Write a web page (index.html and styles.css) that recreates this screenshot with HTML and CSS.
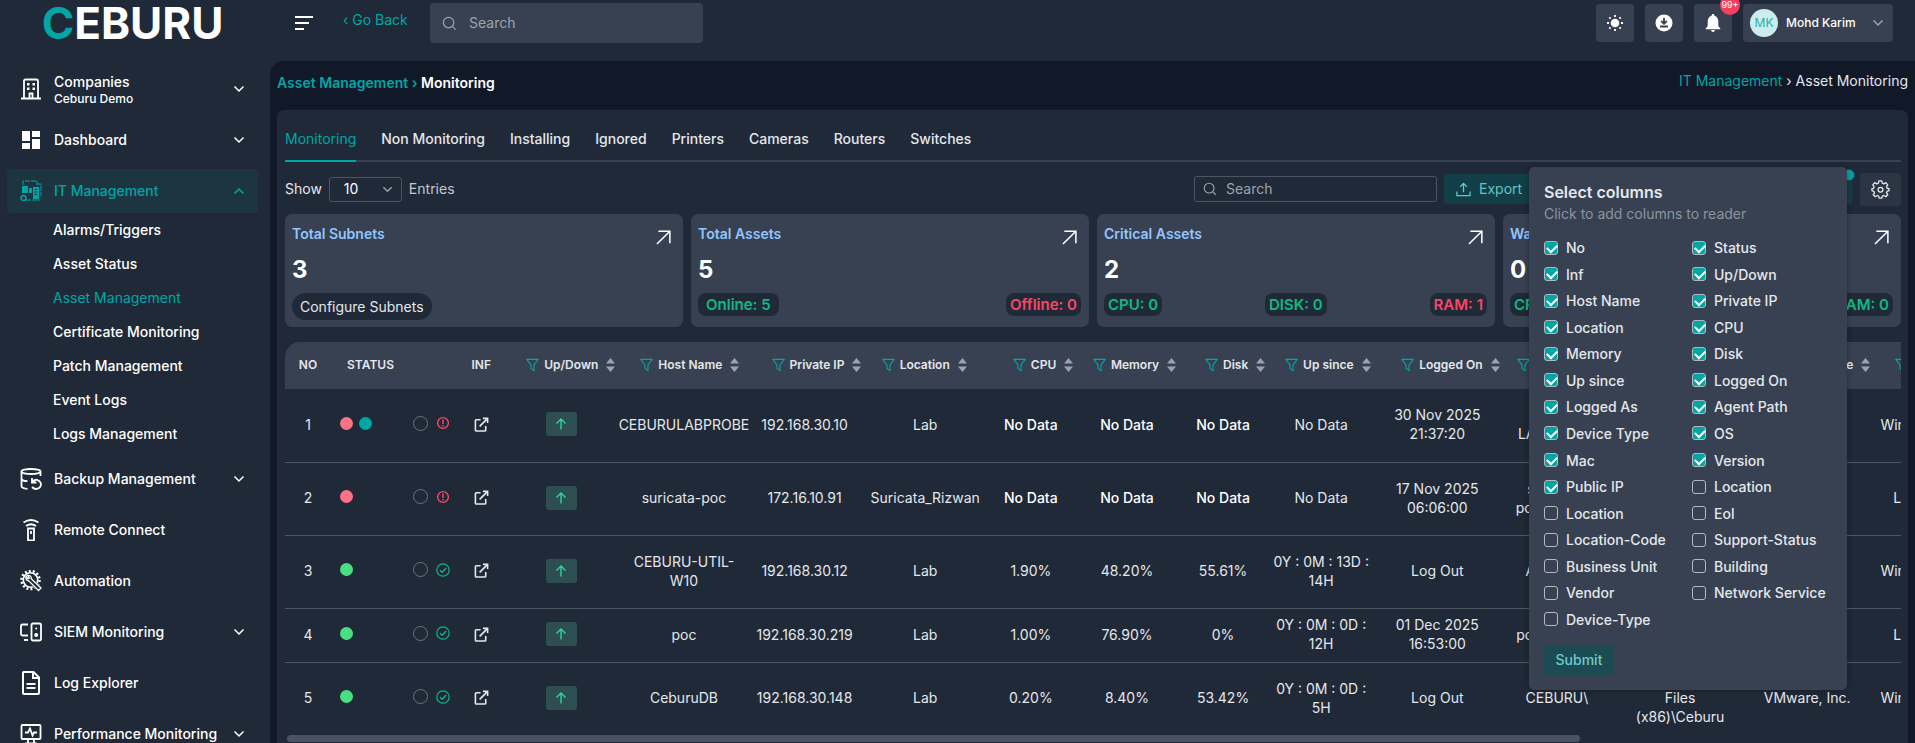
FILE: index.html
```html
<!DOCTYPE html>
<html lang="en">
<head>
    <meta charset="UTF-8">
    <meta name="viewport" content="width=device-width, initial-scale=1.0">
    <title>Asset Monitoring</title>
    <link rel="stylesheet" href="styles.css">
</head>
<body>

<!-- shared icons -->
<svg class="sprite" aria-hidden="true">
    <symbol id="chevron" viewBox="0 0 12 12"><path d="M1.5 3.5 6 8l4.5-4.5" fill="none" stroke="currentColor" stroke-width="1.5"/></symbol>
    <symbol id="search" viewBox="0 0 16 16"><circle cx="7" cy="7" r="5.6" fill="none" stroke="currentColor" stroke-width="1.3"/><path d="m11 11 3.6 3.6" stroke="currentColor" stroke-width="1.3"/></symbol>
    <symbol id="filter" viewBox="0 0 14 14"><path d="M.8 1h12.4L8.6 7v6L5.4 10.6V7z" fill="none" stroke="currentColor" stroke-width="1.2" stroke-linejoin="round"/></symbol>
    <symbol id="sort" viewBox="0 0 9 14"><path d="M4.5 0 9 5.5H0zM4.5 14 9 8.5H0z" fill="currentColor"/></symbol>
    <symbol id="corner" viewBox="0 0 16 16"><path d="M1 15 14.5 1.5M2.5 1.2h12.3V14" fill="none" stroke="currentColor" stroke-width="1.6"/></symbol>
    <symbol id="open" viewBox="0 0 16 16"><path d="M7 3H2.5Q1.5 3 1.5 4v10q0 1 1 1h9q1 0 1-1V9.5M6 10l8-8M9.5 1.500h5v5" fill="none" stroke="currentColor" stroke-width="1.7"/></symbol>
    <symbol id="up" viewBox="0 0 12 12"><path d="M6 11.5V1.2M1.5 5.5 6 1l4.5 4.5" fill="none" stroke="currentColor" stroke-width="1.4"/></symbol>
    <symbol id="alert" viewBox="0 0 14 14"><circle cx="7" cy="7" r="5.4" fill="none" stroke="currentColor" stroke-width="1.4"/><path d="M7 3.5V8M7 9v1.5" stroke="currentColor" stroke-width="1.5"/></symbol>
    <symbol id="ok" viewBox="0 0 14 14"><circle cx="7" cy="7" r="6.2" fill="none" stroke="currentColor" stroke-width="1.2"/><path d="m4 7.2 2.2 2.1L10.2 5" fill="none" stroke="currentColor" stroke-width="1.3"/></symbol>
</svg>

<div class="layout">
    <aside class="sidebar">
        <a href="#" class="logo"><span>C</span>EBURU</a>
        <nav class="menu">
            <button class="menu-item">
                <svg class="menu-icon" viewBox="0 0 22 22"><path d="M4 20.500V3q0-1.500 1.500-1.500h11Q18 1.500 18 3v17.500M1 20.500h20M9.500 20v-4.500h3V20" fill="none" stroke="currentColor" stroke-width="1.800"/><path d="M7 5h2.500v2.500H7zM12.500 5H15v2.500h-2.500zM7 9.500h2.500V12H7zM12.500 9.500H15V12h-2.500z" fill="currentColor"/></svg>
                <span class="menu-text">Companies<small>Ceburu Demo</small></span>
                <svg class="chev"><use href="#chevron"/></svg>
            </button>
            <button class="menu-item">
                <svg class="menu-icon" viewBox="0 0 22 22"><path d="M2 2h8v10H2zM12 2h8v6h-8zM2 14h8v6H2zM12 10h8v10h-8z" fill="currentColor"/></svg>
                <span class="menu-text">Dashboard</span>
                <svg class="chev"><use href="#chevron"/></svg>
            </button>
            <button class="menu-item active">
                <svg class="menu-icon" viewBox="0 0 22 22"><path d="M3 5V1h14v4M17 4h4v12M6 20h14" fill="none" stroke="currentColor" stroke-width="1" stroke-dasharray="5 1"/><path d="M2 6h6v7H2zM9 8h3v5H9zM13 7h6v12h-6z" fill="currentColor"/><path d="M14.500 9.500h3M14.500 12h3M14.500 14.500h3" stroke="#1d3540"/><circle cx="3.500" cy="18" r="2.500" fill="none" stroke="currentColor" stroke-width="1.400"/></svg>
                <span class="menu-text">IT Management</span>
                <svg class="chev open"><use href="#chevron"/></svg>
            </button>
            <div class="submenu">
                <a href="#">Alarms/Triggers</a>
                <a href="#">Asset Status</a>
                <a href="#" class="current">Asset Management</a>
                <a href="#">Certificate Monitoring</a>
                <a href="#">Patch Management</a>
                <a href="#">Event Logs</a>
                <a href="#">Logs Management</a>
            </div>
            <button class="menu-item">
                <svg class="menu-icon" viewBox="0 0 22 22"><g fill="none" stroke="currentColor" stroke-width="1.800"><ellipse cx="11" cy="3.500" rx="9.500" ry="2.500"/><path d="M1.500 3.500V18q0 2.500 6 2.800M20.500 3.500V8M1.500 11q1 2 6 2.200M12 10v4.500h4.500M12.500 14q2-3 5-2 3.500 1.500 3.500 4.500-.5 4-5 4.500-2 0-4-2"/></g></svg>
                <span class="menu-text">Backup Management</span>
                <svg class="chev"><use href="#chevron"/></svg>
            </button>
            <a href="#" class="menu-item">
                <svg class="menu-icon" viewBox="0 0 22 22"><path d="M3.500 3.500q7.500-5 15 0M6 7q5-3.500 10 0M8 9.500h6v12H8zM11 12v3" fill="none" stroke="currentColor" stroke-width="1.800"/></svg>
                <span class="menu-text">Remote Connect</span>
            </a>
            <a href="#" class="menu-item">
                <svg class="menu-icon" viewBox="0 0 22 22"><circle cx="10.500" cy="10" r="9" fill="none" stroke="currentColor" stroke-width="2.500" stroke-dasharray="2 2.040"/><circle cx="10.500" cy="10" r="7.200" fill="none" stroke="currentColor" stroke-width="1.600"/><path d="m9 9 11.500 11" stroke="#1f2937" stroke-width="5.500"/><path d="M6 6.500q-1 4 3 4.500l9.500 9.500 2.500-2.500-9.500-9q0-4-4-3.500l2 2.500-1.500 1z" fill="none" stroke="currentColor" stroke-width="1.300"/></svg>
                <span class="menu-text">Automation</span>
            </a>
            <button class="menu-item">
                <svg class="menu-icon" viewBox="0 0 22 22"><path d="M8 3.500H2.500Q1 3.500 1 5v8q0 1.500 1.500 1.500H8M4 19h4M13 2.500h6.500Q21 2.500 21 4v14q0 1.500-1.500 1.500H13q-1.500 0-1.500-1.500V4q0-1.500 1.500-1.500z" fill="none" stroke="currentColor" stroke-width="1.800"/><circle cx="16.200" cy="14" r="2" fill="currentColor"/><circle cx="16.200" cy="7.500" r="1" fill="currentColor"/></svg>
                <span class="menu-text">SIEM Monitoring</span>
                <svg class="chev"><use href="#chevron"/></svg>
            </button>
            <a href="#" class="menu-item">
                <svg class="menu-icon tall" viewBox="0 0 22 24"><path d="M3.500 1h10L19 6.500V22q0 1-1 1H4q-1 0-1-1V2q0-1 .5-1zM13 1v6h6M6.500 13h9M6.500 17h9" fill="none" stroke="currentColor" stroke-width="2"/></svg>
                <span class="menu-text">Log Explorer</span>
            </a>
            <button class="menu-item">
                <svg class="menu-icon" viewBox="0 0 22 22"><path d="M2.500 2h17q1 0 1 1v12q0 1-1 1h-17q-1 0-1-1V3q0-1 1-1zM8 16v4M14 16v4M5 20.500h12M5 9.500h3l2-4 2.500 7 1.500-3h3" fill="none" stroke="currentColor" stroke-width="1.800"/></svg>
                <span class="menu-text">Performance Monitoring</span>
                <svg class="chev"><use href="#chevron"/></svg>
            </button>
        </nav>
    </aside>

    <div class="page">
        <header class="topbar">
            <button class="burger" aria-label="Toggle menu"><span></span><span></span><span></span></button>
            <a href="#" class="go-back">&lsaquo; Go Back</a>
            <label class="top-search">
                <svg><use href="#search"/></svg>
                <input type="text" placeholder="Search" aria-label="Search">
            </label>
            <div class="top-actions">
                <button class="icon-button" aria-label="Theme">
                    <svg viewBox="0 0 18 18"><circle cx="9" cy="9" r="4.300" fill="currentColor"/><path d="M9 1v2M9 15v2M1 9h2M15 9h2M3.300 3.300l1.300 1.300M13.400 13.400l1.300 1.300M3.300 14.700l1.300-1.300M13.400 4.600l1.300-1.300" stroke="currentColor" stroke-width="1.800"/></svg>
                </button>
                <button class="icon-button" aria-label="Downloads">
                    <svg viewBox="0 0 18 18"><circle cx="9" cy="9" r="8.500" fill="currentColor"/><path d="M9 4v5.500M6.200 7 9 9.800 11.800 7M5 12.500h8" fill="none" stroke="#374151" stroke-width="1.800"/></svg>
                </button>
                <button class="icon-button" aria-label="Notifications">
                    <svg viewBox="0 0 18 18"><path d="M9 0q1.300 0 1.300 1.400Q14.300 3 14.300 7.500V12l2 2.500v.8H1.700v-.8l2-2.500V7.500Q3.700 3 7.700 1.400 7.700 0 9 0zM7 16h4q-.5 2-2 2t-2-2z" fill="currentColor"/></svg>
                    <span class="notify">99+</span>
                </button>
                <button class="user">
                    <span class="avatar">MK</span>
                    <span class="user-name">Mohd Karim</span>
                    <svg class="chev"><use href="#chevron"/></svg>
                </button>
            </div>
        </header>

        <main class="content">
            <div class="crumbs">
                <div class="crumbs-main"><a href="#">Asset Management ›</a> <span>Monitoring</span></div>
                <div class="crumbs-path"><a href="#">IT Management</a> <span>›</span> <span>Asset Monitoring</span></div>
            </div>

            <section class="panel">
                <nav class="tabs">
                    <a href="#" class="active">Monitoring</a>
                    <a href="#">Non Monitoring</a>
                    <a href="#">Installing</a>
                    <a href="#">Ignored</a>
                    <a href="#">Printers</a>
                    <a href="#">Cameras</a>
                    <a href="#">Routers</a>
                    <a href="#">Switches</a>
                </nav>

                <div class="toolbar">
                    <label for="entries">Show</label>
                    <span class="select-box">
                        <select id="entries"><option>10</option><option>25</option><option>50</option></select>
                        <svg><use href="#chevron"/></svg>
                    </span>
                    <span class="muted">Entries</span>
                    <label class="table-search">
                        <svg><use href="#search"/></svg>
                        <input type="text" placeholder="Search" aria-label="Search assets">
                    </label>
                    <button class="teal-button export">
                        <svg viewBox="0 0 16 16"><path d="M8 11V1.500M4.500 5 8 1.500 11.500 5M1 10v4.500h14V10" fill="none" stroke="currentColor" stroke-width="1.400"/></svg>
                        Export
                    </button>
                    <button class="teal-button filters" aria-label="Filters"><span class="dot-badge"></span></button>
                    <button class="gear" aria-label="Columns">
                        <svg viewBox="0 0 20 20"><path d="m8.300 1-.5 2.300-1.700.8-2.200-1.300-2 2.400 1.300 2-.5 1.600L1 9.200v2l2 .7.600 1.600-1.300 2.100 2.200 2 2-1.300 1.600.7.500 2h2.800l.5-2 1.700-.7 2 1.300 2-2.100-1.300-2 .7-1.600 2-.7v-2l-2-.5-.7-1.600 1.300-2-2-2.300-2.100 1.300-1.600-.8L11.300 1z" fill="none" stroke="currentColor" stroke-width="1.400" stroke-linejoin="round"/><circle cx="10" cy="10.200" r="2.500" fill="none" stroke="currentColor" stroke-width="1.400"/></svg>
                    </button>

                    <form class="columns-menu">
                        <h3>Select columns</h3>
                        <p>Click to add columns to reader</p>
                        <div class="columns-grid">
                            <label><input type="checkbox" checked>No</label>
                            <label><input type="checkbox" checked>Status</label>
                            <label><input type="checkbox" checked>Inf</label>
                            <label><input type="checkbox" checked>Up/Down</label>
                            <label><input type="checkbox" checked>Host Name</label>
                            <label><input type="checkbox" checked>Private IP</label>
                            <label><input type="checkbox" checked>Location</label>
                            <label><input type="checkbox" checked>CPU</label>
                            <label><input type="checkbox" checked>Memory</label>
                            <label><input type="checkbox" checked>Disk</label>
                            <label><input type="checkbox" checked>Up since</label>
                            <label><input type="checkbox" checked>Logged On</label>
                            <label><input type="checkbox" checked>Logged As</label>
                            <label><input type="checkbox" checked>Agent Path</label>
                            <label><input type="checkbox" checked>Device Type</label>
                            <label><input type="checkbox" checked>OS</label>
                            <label><input type="checkbox" checked>Mac</label>
                            <label><input type="checkbox" checked>Version</label>
                            <label><input type="checkbox" checked>Public IP</label>
                            <label><input type="checkbox">Location</label>
                            <label><input type="checkbox">Location</label>
                            <label><input type="checkbox">Eol</label>
                            <label><input type="checkbox">Location-Code</label>
                            <label><input type="checkbox">Support-Status</label>
                            <label><input type="checkbox">Business Unit</label>
                            <label><input type="checkbox">Building</label>
                            <label><input type="checkbox">Vendor</label>
                            <label><input type="checkbox">Network Service</label>
                            <label><input type="checkbox">Device-Type</label>
                        </div>
                        <button type="button" class="submit">Submit</button>
                    </form>
                </div>

                <div class="stats">
                    <div class="stat">
                        <div class="stat-head"><h4>Total Subnets</h4><svg><use href="#corner"/></svg></div>
                        <strong>3</strong>
                        <div class="stat-foot"><button class="configure">Configure Subnets</button></div>
                    </div>
                    <div class="stat">
                        <div class="stat-head"><h4>Total Assets</h4><svg><use href="#corner"/></svg></div>
                        <strong>5</strong>
                        <div class="stat-foot"><span class="badge wide good">Online: 5</span><span class="badge bad">Offline: 0</span></div>
                    </div>
                    <div class="stat">
                        <div class="stat-head"><h4>Critical Assets</h4><svg><use href="#corner"/></svg></div>
                        <strong>2</strong>
                        <div class="stat-foot"><span class="badge good">CPU: 0</span><span class="badge good">DISK: 0</span><span class="badge bad">RAM: 1</span></div>
                    </div>
                    <div class="stat">
                        <div class="stat-head"><h4>Warning Assets</h4><svg><use href="#corner"/></svg></div>
                        <strong>0</strong>
                        <div class="stat-foot"><span class="badge good">CPU: 0</span><span class="badge good">DISK: 0</span><span class="badge good">RAM: 0</span></div>
                    </div>
                </div>

                <div class="table-wrap">
                    <table>
                        <colgroup>
                            <col class="w-no"><col class="w-status"><col class="w-no"><col class="w-updown"><col class="w-host"><col class="w-ip"><col class="w-host"><col class="w-cpu"><col class="w-mem"><col class="w-cpu"><col class="w-since"><col class="w-since"><col class="w-path"><col class="w-path"><col class="w-host"><col class="w-os">
                        </colgroup>
                        <thead>
                            <tr>
                                <th class="plain">NO</th>
                                <th class="plain left">STATUS</th>
                                <th class="plain">INF</th>
                                <th><svg class="filter"><use href="#filter"/></svg>Up/Down<svg class="sort"><use href="#sort"/></svg></th>
                                <th><svg class="filter"><use href="#filter"/></svg>Host Name<svg class="sort"><use href="#sort"/></svg></th>
                                <th><svg class="filter"><use href="#filter"/></svg>Private IP<svg class="sort"><use href="#sort"/></svg></th>
                                <th><svg class="filter"><use href="#filter"/></svg>Location<svg class="sort"><use href="#sort"/></svg></th>
                                <th><svg class="filter"><use href="#filter"/></svg>CPU<svg class="sort"><use href="#sort"/></svg></th>
                                <th><svg class="filter"><use href="#filter"/></svg>Memory<svg class="sort"><use href="#sort"/></svg></th>
                                <th><svg class="filter"><use href="#filter"/></svg>Disk<svg class="sort"><use href="#sort"/></svg></th>
                                <th><svg class="filter"><use href="#filter"/></svg>Up since<svg class="sort"><use href="#sort"/></svg></th>
                                <th><svg class="filter"><use href="#filter"/></svg>Logged On<svg class="sort"><use href="#sort"/></svg></th>
                                <th><svg class="filter"><use href="#filter"/></svg>Logged As<svg class="sort"><use href="#sort"/></svg></th>
                                <th><svg class="filter"><use href="#filter"/></svg>Agent Path<svg class="sort"><use href="#sort"/></svg></th>
                                <th><svg class="filter"><use href="#filter"/></svg>Device Type<svg class="sort"><use href="#sort"/></svg></th>
                                <th><svg class="filter"><use href="#filter"/></svg>OS<svg class="sort"><use href="#sort"/></svg></th>
                            </tr>
                        </thead>
                        <tbody>
                            <tr>
                                <td>1</td>
                                <td><div class="status"><span class="dots"><i class="red"></i><i class="teal"></i></span><i class="ring"></i><svg class="bad"><use href="#alert"/></svg></div></td>
                                <td><svg class="inf"><use href="#open"/></svg></td>
                                <td><button class="updown" aria-label="Up"><svg><use href="#up"/></svg></button></td>
                                <td>CEBURULABPROBE</td>
                                <td>192.168.30.10</td>
                                <td>Lab</td>
                                <td class="bright">No Data</td>
                                <td class="bright">No Data</td>
                                <td class="bright">No Data</td>
                                <td>No Data</td>
                                <td>30 Nov 2025<br>21:37:20</td>
                                <td>CEBU<br>LABPROBE\</td>
                                <td>Program<br>Files<br>(x86)\Ceburu</td>
                                <td>VMware</td>
                                <td>Windows</td>
                            </tr>
                            <tr>
                                <td>2</td>
                                <td><div class="status"><span class="dots"><i class="red"></i></span><i class="ring"></i><svg class="bad"><use href="#alert"/></svg></div></td>
                                <td><svg class="inf"><use href="#open"/></svg></td>
                                <td><button class="updown" aria-label="Up"><svg><use href="#up"/></svg></button></td>
                                <td>suricata-poc</td>
                                <td>172.16.10.91</td>
                                <td>Suricata_Rizwan</td>
                                <td class="bright">No Data</td>
                                <td class="bright">No Data</td>
                                <td class="bright">No Data</td>
                                <td>No Data</td>
                                <td>17 Nov 2025<br>06:06:00</td>
                                <td>suricata-<br>poc\suricata</td>
                                <td>/opt/ceburu</td>
                                <td>VMware</td>
                                <td>Linux</td>
                            </tr>
                            <tr>
                                <td>3</td>
                                <td><div class="status"><span class="dots"><i class="green"></i></span><i class="ring"></i><svg class="good"><use href="#ok"/></svg></div></td>
                                <td><svg class="inf"><use href="#open"/></svg></td>
                                <td><button class="updown" aria-label="Up"><svg><use href="#up"/></svg></button></td>
                                <td>CEBURU-UTIL-<br>W10</td>
                                <td>192.168.30.12</td>
                                <td>Lab</td>
                                <td>1.90%</td>
                                <td>48.20%</td>
                                <td>55.61%</td>
                                <td>0Y : 0M : 13D :<br>14H</td>
                                <td>Log Out</td>
                                <td>AzureAD\</td>
                                <td>Program<br>Files<br>(x86)\Ceburu</td>
                                <td>VMware</td>
                                <td>Windows</td>
                            </tr>
                            <tr class="short">
                                <td>4</td>
                                <td><div class="status"><span class="dots"><i class="green"></i></span><i class="ring"></i><svg class="good"><use href="#ok"/></svg></div></td>
                                <td><svg class="inf"><use href="#open"/></svg></td>
                                <td><button class="updown" aria-label="Up"><svg><use href="#up"/></svg></button></td>
                                <td>poc</td>
                                <td>192.168.30.219</td>
                                <td>Lab</td>
                                <td>1.00%</td>
                                <td>76.90%</td>
                                <td>0%</td>
                                <td>0Y : 0M : 0D :<br>12H</td>
                                <td>01 Dec 2025<br>16:53:00</td>
                                <td>poc\ubuntu1</td>
                                <td>/opt/ceburu</td>
                                <td>VMware</td>
                                <td>Linux</td>
                            </tr>
                            <tr>
                                <td>5</td>
                                <td><div class="status"><span class="dots"><i class="green"></i></span><i class="ring"></i><svg class="good"><use href="#ok"/></svg></div></td>
                                <td><svg class="inf"><use href="#open"/></svg></td>
                                <td><button class="updown" aria-label="Up"><svg><use href="#up"/></svg></button></td>
                                <td>CeburuDB</td>
                                <td>192.168.30.148</td>
                                <td>Lab</td>
                                <td>0.20%</td>
                                <td>8.40%</td>
                                <td>53.42%</td>
                                <td>0Y : 0M : 0D :<br>5H</td>
                                <td>Log Out</td>
                                <td>CEBURU\</td>
                                <td>Program<br>Files<br>(x86)\Ceburu</td>
                                <td>VMware, Inc.</td>
                                <td>Windows</td>
                            </tr>
                        </tbody>
                    </table>
                    <div class="scrollbar"></div>
                </div>
            </section>
        </main>
    </div>
</div>

</body>
</html>
```
FILE: styles.css
```css
* {
    box-sizing: border-box;
}
body {
    margin: 0;
    background-color: #1f2937;
    color: #e5e7eb;
    font-family: Inter, "Liberation Sans", sans-serif;
    font-size: 14px;
    line-height: 20px;
}
button, input, select {
    font: inherit;
    color: inherit;
}
button {
    border: none;
    background: none;
    padding: 0;
    cursor: pointer;
}
a {
    color: inherit;
    text-decoration: none;
}
h3, h4, p {
    margin: 0;
}
.sprite {
    display: none;
}
.layout {
    display: flex;
    height: 100vh;
    overflow: hidden;
}

/* sidebar */
.sidebar {
    flex: 0 0 270px;
    padding: 0 12px 0 7px;
    color: #fff;
}
.logo {
    display: flex;
    justify-content: center;
    align-items: center;
    height: 46px;
    margin-bottom: 21px;
    font-size: 44px;
    line-height: 46px;
    font-weight: 700;
}
.logo span {
    color: #00a6a6;
}
.menu {
    display: flex;
    flex-direction: column;
    gap: 7px;
}
.menu-item {
    display: flex;
    align-items: center;
    gap: 12px;
    flex: none;
    height: 44px;
    padding: 0 13px;
    border-radius: 4px;
    text-align: left;
    font-weight: 500;
}
.menu-item.active {
    background-color: #1d3540;
    color: #00a6a6;
}
.menu-icon {
    width: 22px;
    height: 22px;
}
.menu-icon.tall {
    height: 24px;
}
.menu-text {
    flex: 1;
    white-space: nowrap;
}
.menu-text small {
    display: block;
    font-size: 12px;
    line-height: 14px;
}
.chev {
    width: 12px;
    height: 12px;
}
.chev.open {
    transform: rotate(180deg);
}
.submenu {
    display: flex;
    flex-direction: column;
    margin: -7px 0 -1px;
    padding-left: 46px;
    font-weight: 500;
}
.submenu a {
    line-height: 34px;
}
.submenu .current {
    color: #00a6a6;
    font-weight: 400;
}

/* top bar */
.page {
    flex: 1;
    min-width: 0;
    display: flex;
    flex-direction: column;
}
.topbar {
    display: flex;
    align-items: flex-start;
    flex: none;
    height: 61px;
    padding: 3px 22px 0 25px;
}
.burger {
    display: flex;
    flex-direction: column;
    gap: 4px;
    margin: 13px 30px 0 0;
}
.burger span {
    width: 18px;
    height: 2px;
    background-color: #fff;
}
.burger span:nth-child(2) {
    width: 14px;
}
.burger span:last-child {
    width: 9px;
}
.go-back {
    width: 87px;
    line-height: 34px;
    color: #00a6a6;
    white-space: nowrap;
}
.top-search {
    display: flex;
    align-items: center;
    gap: 12px;
    width: 273px;
    height: 40px;
    padding: 0 12px;
    border-radius: 4px;
    background-color: #374151;
    color: #9ca3af;
}
.top-search svg {
    width: 15px;
    height: 15px;
}
.top-search input, .table-search input {
    flex: 1;
    min-width: 0;
    padding: 0;
    border: none;
    outline: none;
    background: none;
}
input::placeholder {
    color: #9ca3af;
}
.top-actions {
    display: flex;
    gap: 11px;
    margin: 1px 0 0 auto;
}
.icon-button {
    position: relative;
    display: flex;
    align-items: center;
    justify-content: center;
    width: 38px;
    height: 38px;
    border-radius: 4px;
    background-color: #374151;
    color: #fff;
}
.icon-button svg {
    width: 18px;
    height: 18px;
}
.notify {
    position: absolute;
    top: -9px;
    right: -8px;
    width: 20px;
    height: 20px;
    border-radius: 10px;
    background-color: #f43f5e;
    font-size: 9px;
    line-height: 20px;
    text-align: center;
}
.user {
    display: flex;
    align-items: center;
    width: 150px;
    height: 38px;
    padding: 0 9px 0 7px;
    border-radius: 4px;
    background-color: #374151;
    color: #fff;
    font-size: 12px;
    font-weight: 500;
}
.avatar {
    width: 28px;
    height: 28px;
    margin-right: 8px;
    border-radius: 50%;
    background-color: #ccedec;
    color: #28aeb0;
    line-height: 28px;
    font-weight: 400;
}
.user .chev {
    margin-left: auto;
    color: #9ca3af;
}

/* content */
.content {
    flex: 1;
    min-height: 0;
    padding: 0 7px;
    border-top-left-radius: 14px;
    background-color: #111827;
}
.crumbs {
    display: flex;
    justify-content: space-between;
    height: 49px;
    padding-top: 10px;
}
.crumbs a {
    color: #00a6a6;
}
.crumbs-main {
    padding-top: 2px;
    font-weight: 600;
}
.crumbs-main span {
    color: #fff;
}
.panel {
    padding: 0 7px 0 8px;
    border-radius: 7px 7px 0 0;
    background-color: #1f2937;
}
.tabs {
    display: flex;
    gap: 25px;
    height: 52px;
    border-bottom: 2px solid #374151;
    font-weight: 500;
}
.tabs a {
    height: 52px;
    padding-top: 19px;
}
.tabs .active {
    border-bottom: 2px solid #00a6a6;
    color: #00a6a6;
    font-weight: 400;
}
.toolbar {
    position: relative;
    display: flex;
    align-items: center;
    height: 52px;
    padding-top: 2px;
}
.select-box {
    position: relative;
    margin: 0 7px;
}
.select-box select {
    display: block;
    width: 73px;
    height: 25px;
    padding: 0 14px;
    border: 1px solid #4b5563;
    border-radius: 3px;
    background-color: #1f2937;
    appearance: none;
    color: #fff;
}
.select-box svg {
    position: absolute;
    top: 7px;
    right: 9px;
    width: 11px;
    height: 11px;
    color: #9ca3af;
}
.muted {
    color: #c3c7ce;
}
.table-search {
    display: flex;
    align-items: center;
    gap: 9px;
    width: 243px;
    height: 26px;
    margin-left: auto;
    padding: 0 8px;
    border: 1px solid #4b5563;
    border-radius: 3px;
    color: #9ca3af;
}
.table-search svg {
    width: 14px;
    height: 14px;
}
.teal-button {
    display: flex;
    align-items: center;
    height: 30px;
    margin-left: 7px;
    padding: 0 12px;
    border-radius: 3px;
    background-color: #123f47;
    color: #5fc7c4;
}
.export {
    gap: 8px;
    width: 110px;
}
.export svg {
    width: 15px;
    height: 15px;
}
.filters {
    position: relative;
    width: 291px;
}
.dot-badge {
    position: absolute;
    top: -5px;
    right: -3px;
    width: 12px;
    height: 12px;
    border: 1px solid #374151;
    border-radius: 50%;
    background-color: #00a6a6;
}
.gear {
    display: flex;
    align-items: center;
    justify-content: center;
    width: 41px;
    height: 33px;
    margin-left: 8px;
    border-radius: 3px;
    background-color: #2b3544;
}
.gear svg {
    width: 19px;
    height: 19px;
}

/* column picker */
.columns-menu {
    position: absolute;
    z-index: 2;
    top: 5px;
    right: 54px;
    width: 318px;
    padding: 14px 15px 15px;
    border-radius: 5px;
    background-color: #374151;
    box-shadow: 0 0 6px rgba(0, 0, 0, 0.3);
}
.columns-menu h3 {
    font-size: 16px;
    line-height: 22px;
    font-weight: 600;
}
.columns-menu p {
    line-height: 22px;
    color: #8c939f;
}
.columns-grid {
    display: grid;
    grid-template-columns: 148px 1fr;
    align-content: space-between;
    height: 393px;
    margin: 12px 0 15px;
}
.columns-grid label {
    display: flex;
    align-items: center;
    gap: 8px;
    line-height: 21px;
    font-weight: 500;
}
.columns-grid input {
    width: 14px;
    height: 14px;
    margin: 0;
    border: 1px solid #b4b9c1;
    border-radius: 3px;
    appearance: none;
}
.columns-grid input:checked {
    background-color: #00a6a6;
}
.columns-grid input:checked::after {
    content: "";
    display: block;
    width: 8px;
    height: 5px;
    margin: 2px;
    border-left: 2px solid #fff;
    border-bottom: 2px solid #fff;
    transform: rotate(-45deg);
}
.submit {
    display: block;
    width: 70px;
    height: 30px;
    border-radius: 3px;
    background-color: #1d4b54;
    color: #6cccc8;
    font-weight: 500;
}

/* summary cards */
.stats {
    display: grid;
    grid-template-columns: repeat(4, 1fr);
    gap: 8px;
}
.stat {
    height: 113px;
    padding: 10px 8px 0 7px;
    border-radius: 7px;
    background-color: #374151;
}
.stat-head {
    display: flex;
    justify-content: space-between;
}
.stat-head svg {
    width: 15px;
    height: 15px;
    margin: 6px 4px 0 0;
    color: #fff;
}
.stat h4 {
    color: #93c5fd;
    font-weight: 600;
}
.stat strong {
    display: block;
    margin: 10px 0 8px;
    color: #fff;
    font-size: 24px;
    line-height: 30px;
}
.stat-foot {
    display: flex;
    justify-content: space-between;
    align-items: flex-start;
}
.configure {
    height: 27px;
    padding: 0 8px;
    border-radius: 14px;
    background-color: #1f2937;
}
.badge {
    padding: 0 4px;
    border-radius: 8px;
    background-color: #1f2937;
    font-size: 15px;
    line-height: 23px;
    font-weight: 600;
}
.badge.wide {
    padding: 0 8px;
}
.good {
    color: #10b981;
}
.bad {
    color: #fb4566;
}

/* assets table */
.table-wrap {
    margin-top: 15px;
    overflow: hidden;
    border-top-left-radius: 15px;
}
table {
    width: 1664px;
    table-layout: fixed;
    border-collapse: collapse;
    text-align: center;
}
.w-no { width: 46px; }
.w-status { width: 127px; }
.w-updown { width: 114px; }
.w-host { width: 131px; }
.w-ip { width: 110px; }
.w-cpu { width: 80px; }
.w-mem { width: 112px; }
.w-since { width: 116px; }
.w-path { width: 123px; }
.w-os { width: 76px; }
th {
    height: 47px;
    padding: 0 0 2px 22px;
    background-color: #374151;
    font-size: 12px;
    font-weight: 600;
    line-height: 18px;
    text-align: left;
    white-space: nowrap;
}
th.plain {
    padding-left: 0;
    text-align: center;
}
th.left {
    padding-left: 16px;
    text-align: left;
}
th svg {
    height: 14px;
    vertical-align: -3px;
}
.filter {
    width: 13px;
    margin-right: 5px;
    color: #00a6a6;
}
.sort {
    width: 9px;
    margin-left: 8px;
    color: #9ca3af;
}
td {
    height: 73px;
    padding: 0 0 2px;
    border-bottom: 1px solid #4b5563;
    line-height: 19px;
    white-space: nowrap;
}
.short td {
    height: 54px;
}
tr:last-child td {
    border-bottom: none;
}
.bright {
    color: #fff;
    font-weight: 500;
}
td svg {
    display: block;
    margin: 0 auto;
}
.status {
    display: flex;
    align-items: center;
    padding: 0 0 2px 9px;
}
.status i {
    width: 13px;
    height: 13px;
    border-radius: 50%;
}
.dots {
    display: flex;
    gap: 6px;
    width: 73px;
}
.red { background-color: #fb7185; }
.teal { background-color: #00a6a6; }
.green { background-color: #4ade80; }
.status .ring {
    width: 15px;
    height: 15px;
    margin-right: 8px;
    border: 1px solid #6b7280;
}
.status svg {
    width: 14px;
    height: 14px;
    margin: 0;
}
.inf {
    width: 15px;
    height: 15px;
}
.updown {
    display: block;
    width: 31px;
    height: 24px;
    margin: 0 auto;
    border-radius: 3px;
    background-color: #2d4f51;
    color: #34d399;
}
.updown svg {
    width: 12px;
    height: 12px;
}
.scrollbar {
    width: 80%;
    height: 7px;
    margin: 0 2px 2px;
    border-radius: 4px;
    background-color: #4b5261;
}
```
